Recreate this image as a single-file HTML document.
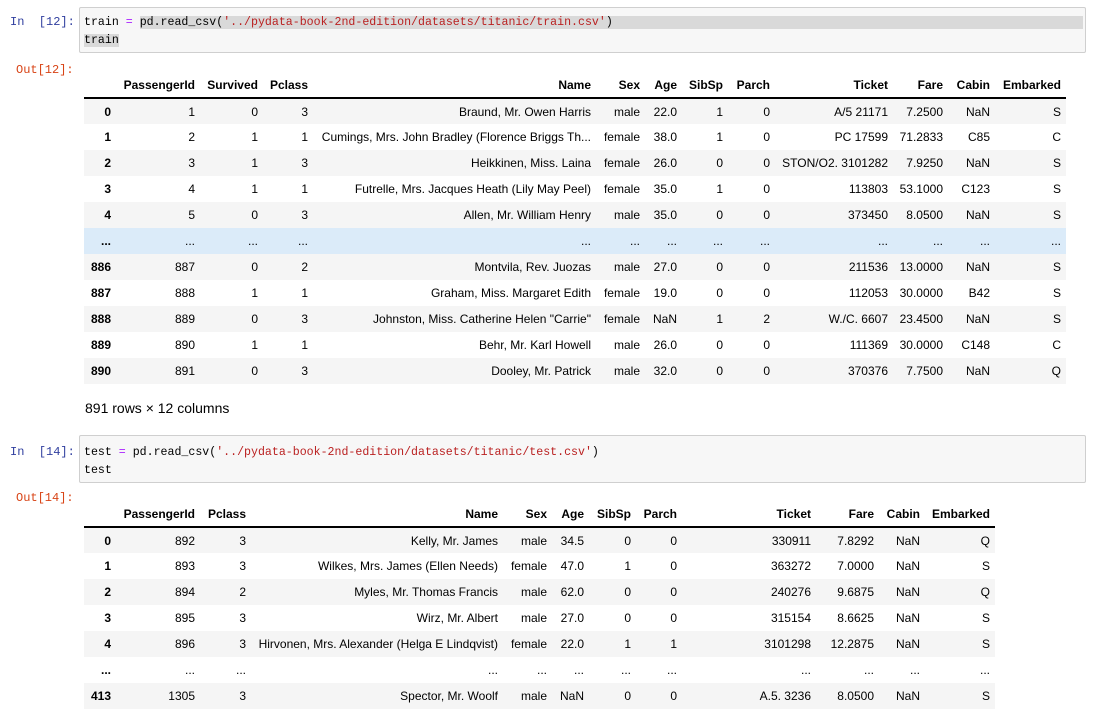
<!DOCTYPE html>
<html><head><meta charset="utf-8"><style>
body{margin:0;width:1107px;height:708px;background:#fff;position:relative;overflow:hidden;font-family:"Liberation Sans",Arial,sans-serif;}
.p{position:absolute;font-family:"Liberation Mono",monospace;font-size:12px;line-height:18px;}
.in{color:#303F9F;left:10px}
.out{color:#D84315;left:16px}
.cell{position:absolute;left:79px;width:1005px;background:#f7f7f7;border:1px solid #cfcfcf;border-radius:2px;}
.code{position:absolute;left:84px;font-family:"Liberation Mono",monospace;font-size:11.6px;line-height:18px;color:#000;white-space:pre}
.hl{background:#d9d9d9}
.s{color:#BA2121}.o{color:#AA22FF}
table{position:absolute;left:84px;border-collapse:collapse;table-layout:fixed;font-size:12px;color:#000}
td,th{padding:0 5px 0 0;text-align:right;white-space:nowrap;overflow:hidden;height:26px;box-sizing:border-box}
thead th{border-bottom:2px solid #000;vertical-align:middle}
tbody th{font-weight:bold}
tbody tr:nth-child(odd){background:#f5f5f5}
tbody tr.h{background:#dbebf9}
</style></head><body>
<div class="cell" style="top:7px;height:44px"></div>
<div class="p in" style="top:13px">In&nbsp;&nbsp;[12]:</div>
<div class="code" style="top:14px">train <span class="o">=</span> <span class="hl" style="padding-right:470px">pd.read_csv(<span class="s">'../pydata-book-2nd-edition/datasets/titanic/train.csv'</span>)</span>
<span class="hl">train</span></div>
<div class="p out" style="top:61px">Out[12]:</div>
<table style="top:72px;width:982px">
<colgroup><col style="width:32px"><col style="width:84px"><col style="width:63px"><col style="width:50px"><col style="width:283px"><col style="width:49px"><col style="width:37px"><col style="width:46px"><col style="width:47px"><col style="width:118px"><col style="width:55px"><col style="width:47px"><col style="width:71px"></colgroup>
<thead><tr><th></th><th>PassengerId</th><th>Survived</th><th>Pclass</th><th>Name</th><th>Sex</th><th>Age</th><th>SibSp</th><th>Parch</th><th>Ticket</th><th>Fare</th><th>Cabin</th><th>Embarked</th></tr></thead>
<tbody>
<tr><th>0</th><td>1</td><td>0</td><td>3</td><td>Braund, Mr. Owen Harris</td><td>male</td><td>22.0</td><td>1</td><td>0</td><td>A/5 21171</td><td>7.2500</td><td>NaN</td><td>S</td></tr>
<tr><th>1</th><td>2</td><td>1</td><td>1</td><td>Cumings, Mrs. John Bradley (Florence Briggs Th...</td><td>female</td><td>38.0</td><td>1</td><td>0</td><td>PC 17599</td><td>71.2833</td><td>C85</td><td>C</td></tr>
<tr><th>2</th><td>3</td><td>1</td><td>3</td><td>Heikkinen, Miss. Laina</td><td>female</td><td>26.0</td><td>0</td><td>0</td><td>STON/O2. 3101282</td><td>7.9250</td><td>NaN</td><td>S</td></tr>
<tr><th>3</th><td>4</td><td>1</td><td>1</td><td>Futrelle, Mrs. Jacques Heath (Lily May Peel)</td><td>female</td><td>35.0</td><td>1</td><td>0</td><td>113803</td><td>53.1000</td><td>C123</td><td>S</td></tr>
<tr><th>4</th><td>5</td><td>0</td><td>3</td><td>Allen, Mr. William Henry</td><td>male</td><td>35.0</td><td>0</td><td>0</td><td>373450</td><td>8.0500</td><td>NaN</td><td>S</td></tr>
<tr class="h"><th>...</th><td>...</td><td>...</td><td>...</td><td>...</td><td>...</td><td>...</td><td>...</td><td>...</td><td>...</td><td>...</td><td>...</td><td>...</td></tr>
<tr><th>886</th><td>887</td><td>0</td><td>2</td><td>Montvila, Rev. Juozas</td><td>male</td><td>27.0</td><td>0</td><td>0</td><td>211536</td><td>13.0000</td><td>NaN</td><td>S</td></tr>
<tr><th>887</th><td>888</td><td>1</td><td>1</td><td>Graham, Miss. Margaret Edith</td><td>female</td><td>19.0</td><td>0</td><td>0</td><td>112053</td><td>30.0000</td><td>B42</td><td>S</td></tr>
<tr><th>888</th><td>889</td><td>0</td><td>3</td><td>Johnston, Miss. Catherine Helen "Carrie"</td><td>female</td><td>NaN</td><td>1</td><td>2</td><td>W./C. 6607</td><td>23.4500</td><td>NaN</td><td>S</td></tr>
<tr><th>889</th><td>890</td><td>1</td><td>1</td><td>Behr, Mr. Karl Howell</td><td>male</td><td>26.0</td><td>0</td><td>0</td><td>111369</td><td>30.0000</td><td>C148</td><td>C</td></tr>
<tr><th>890</th><td>891</td><td>0</td><td>3</td><td>Dooley, Mr. Patrick</td><td>male</td><td>32.0</td><td>0</td><td>0</td><td>370376</td><td>7.7500</td><td>NaN</td><td>Q</td></tr>
</tbody></table>
<div style="position:absolute;left:85px;top:400px;font-size:14px">891 rows × 12 columns</div>

<div class="cell" style="top:435px;height:46px"></div>
<div class="p in" style="top:443px">In&nbsp;&nbsp;[14]:</div>
<div class="code" style="top:444px">test <span class="o">=</span> pd.read_csv(<span class="s">'../pydata-book-2nd-edition/datasets/titanic/test.csv'</span>)
test</div>
<div class="p out" style="top:489px">Out[14]:</div>
<table style="top:501px;width:911px">
<colgroup><col style="width:32px"><col style="width:84px"><col style="width:51px"><col style="width:252px"><col style="width:49px"><col style="width:37px"><col style="width:47px"><col style="width:46px"><col style="width:134px"><col style="width:63px"><col style="width:46px"><col style="width:70px"></colgroup>
<thead><tr><th></th><th>PassengerId</th><th>Pclass</th><th>Name</th><th>Sex</th><th>Age</th><th>SibSp</th><th>Parch</th><th>Ticket</th><th>Fare</th><th>Cabin</th><th>Embarked</th></tr></thead>
<tbody>
<tr><th>0</th><td>892</td><td>3</td><td>Kelly, Mr. James</td><td>male</td><td>34.5</td><td>0</td><td>0</td><td>330911</td><td>7.8292</td><td>NaN</td><td>Q</td></tr>
<tr><th>1</th><td>893</td><td>3</td><td>Wilkes, Mrs. James (Ellen Needs)</td><td>female</td><td>47.0</td><td>1</td><td>0</td><td>363272</td><td>7.0000</td><td>NaN</td><td>S</td></tr>
<tr><th>2</th><td>894</td><td>2</td><td>Myles, Mr. Thomas Francis</td><td>male</td><td>62.0</td><td>0</td><td>0</td><td>240276</td><td>9.6875</td><td>NaN</td><td>Q</td></tr>
<tr><th>3</th><td>895</td><td>3</td><td>Wirz, Mr. Albert</td><td>male</td><td>27.0</td><td>0</td><td>0</td><td>315154</td><td>8.6625</td><td>NaN</td><td>S</td></tr>
<tr><th>4</th><td>896</td><td>3</td><td>Hirvonen, Mrs. Alexander (Helga E Lindqvist)</td><td>female</td><td>22.0</td><td>1</td><td>1</td><td>3101298</td><td>12.2875</td><td>NaN</td><td>S</td></tr>
<tr><th>...</th><td>...</td><td>...</td><td>...</td><td>...</td><td>...</td><td>...</td><td>...</td><td>...</td><td>...</td><td>...</td><td>...</td></tr>
<tr><th>413</th><td>1305</td><td>3</td><td>Spector, Mr. Woolf</td><td>male</td><td>NaN</td><td>0</td><td>0</td><td>A.5. 3236</td><td>8.0500</td><td>NaN</td><td>S</td></tr>
</tbody></table>
</body></html>
